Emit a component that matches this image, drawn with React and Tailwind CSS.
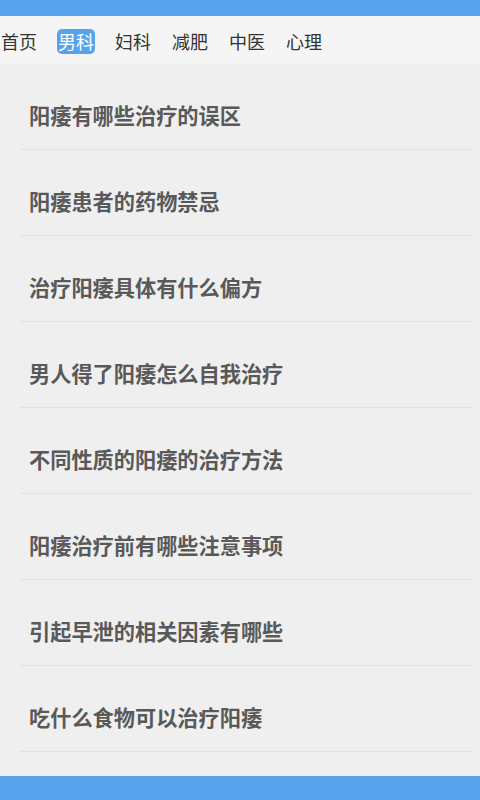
import React from "react";

const tabs = ["首页", "男科", "妇科", "减肥", "中医", "心理"];

const articles = [
  "阳痿有哪些治疗的误区",
  "阳痿患者的药物禁忌",
  "治疗阳痿具体有什么偏方",
  "男人得了阳痿怎么自我治疗",
  "不同性质的阳痿的治疗方法",
  "阳痿治疗前有哪些注意事项",
  "引起早泄的相关因素有哪些",
  "吃什么食物可以治疗阳痿",
];

function App() {
  return (
    <div
      className="w-[480px] h-[800px] flex flex-col bg-[#efefef] overflow-hidden"
      style={{ fontFamily: '"Noto Sans CJK SC", "Noto Sans", sans-serif' }}
    >
      <div className="h-[16px] bg-[#58a4ec]" />
      <div className="h-[48px] bg-[#f5f5f5] flex items-center gap-[19px] pt-[2px]">
        {tabs.map((t, i) => (
          <span
            key={t}
            className={
              i === 1
                ? "px-[1px] h-[25px] leading-[25px] rounded-[5px] bg-[#58a4ec] text-white text-[18px]"
                : "px-[1px] h-[25px] leading-[25px] text-[#333] text-[18px]"
            }
          >
            {t}
          </span>
        ))}
      </div>
      <div className="flex-1 ml-[20px] mr-[7px]">
        {articles.map((a) => (
          <div
            key={a}
            className="h-[86px] pt-[40px] pl-[9px] border-b border-[#e2e2e2]"
          >
            <p className="text-[21.2px] leading-[22px] font-bold text-[#595959]">{a}</p>
          </div>
        ))}
      </div>
      <div className="h-[24px] bg-[#58a4ec]" />
    </div>
  );
}

export default App;
